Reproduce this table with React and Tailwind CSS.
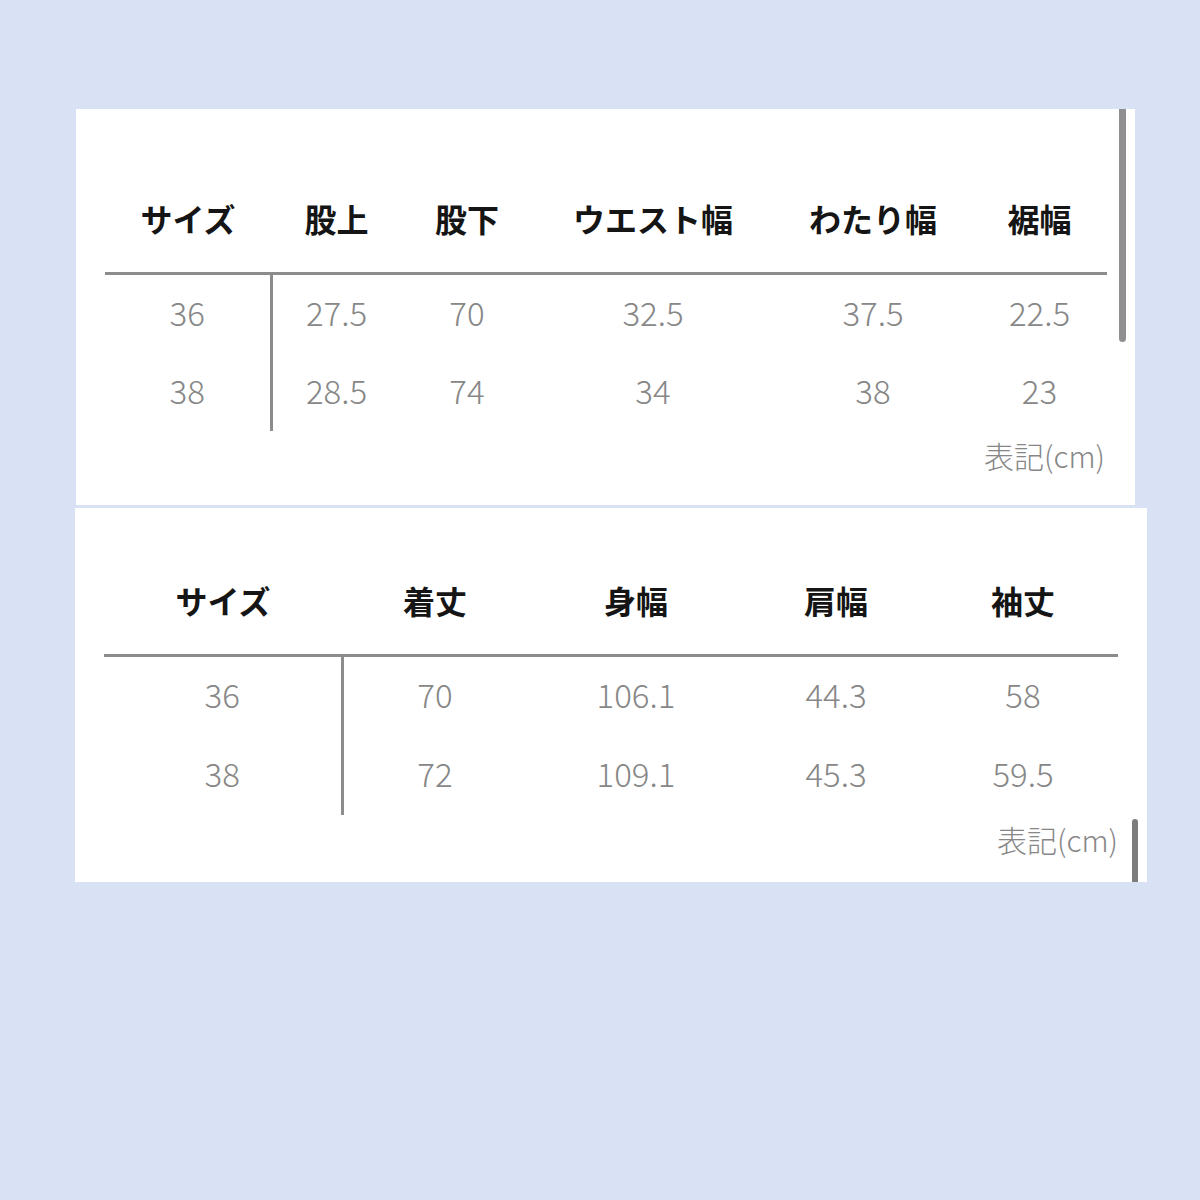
const FONT = { fontFamily: '"Noto Sans CJK JP", "Noto Sans", sans-serif' };

const TOP = {
  cols: 'grid-cols-[166px_131px_130px_242px_198px_135px]',
  head: ['サイズ', '股上', '股下', 'ウエスト幅', 'わたり幅', '裾幅'],
  rows: [
    ['36', '27.5', '70', '32.5', '37.5', '22.5'],
    ['38', '28.5', '74', '34', '38', '23'],
  ],
};

const BOTTOM = {
  cols: 'grid-cols-[238px_186px_216px_184px_190px]',
  head: ['サイズ', '着丈', '身幅', '肩幅', '袖丈'],
  rows: [
    ['36', '70', '106.1', '44.3', '58'],
    ['38', '72', '109.1', '45.3', '59.5'],
  ],
};

function SizeTable({ data, headH, rowH }) {
  return (
    <div>
      <div className={`grid ${data.cols} border-b-[3px] border-[#8c8c8c]`}>
        {data.head.map((h) => (
          <div key={h} className={`${headH} flex items-end justify-center pb-[38px] text-[32px] leading-none font-bold text-[#151515]`}>
            {h}
          </div>
        ))}
      </div>
      {data.rows.map((row, ri) => (
        <div key={ri} className={`grid ${data.cols}`}>
          {row.map((v, ci) => (
            <div
              key={ci}
              className={`${rowH} flex items-center justify-center pb-[4px] text-[33px] leading-none font-light text-[#878787] ${ci === 0 ? 'border-r-[3px] border-[#8c8c8c] -mr-[1.5px]' : ''}`}
            >
              {v}
            </div>
          ))}
        </div>
      ))}
    </div>
  );
}

export default function App() {
  return (
    <div style={FONT} className="w-[1200px] h-[1200px] bg-[#d9e2f5] overflow-hidden">
      <div className="pt-[109px] flex flex-col">
        {/* top card: pants */}
        <div className="relative ml-[76px] w-[1059px] h-[396px] bg-white">
          <div className="pl-[29px] w-[1031px]">
            <SizeTable data={TOP} headH="h-[163px]" rowH="h-[78px]" />
            <div className="mt-[9px] pr-[2px] text-right text-[30px] leading-none font-light text-[#878787]">表記(cm)</div>
          </div>
          <div className="absolute left-[1043px] top-0 w-[7px] h-[233px] rounded-b-full bg-[#8f8f8f]" />
        </div>

        {/* bottom card: tops */}
        <div className="relative mt-[3px] ml-[75px] w-[1072px] h-[374px] bg-white">
          <div className="pl-[29px] w-[1043px]">
            <SizeTable data={BOTTOM} headH="h-[146px]" rowH="h-[79px]" />
            <div className="mt-[9px] text-right text-[30px] leading-none font-light text-[#878787]">表記(cm)</div>
          </div>
          <div className="absolute left-[1057px] top-[311px] w-[6px] h-[63px] rounded-t-full bg-[#7d7d7d]" />
        </div>
      </div>
    </div>
  );
}
